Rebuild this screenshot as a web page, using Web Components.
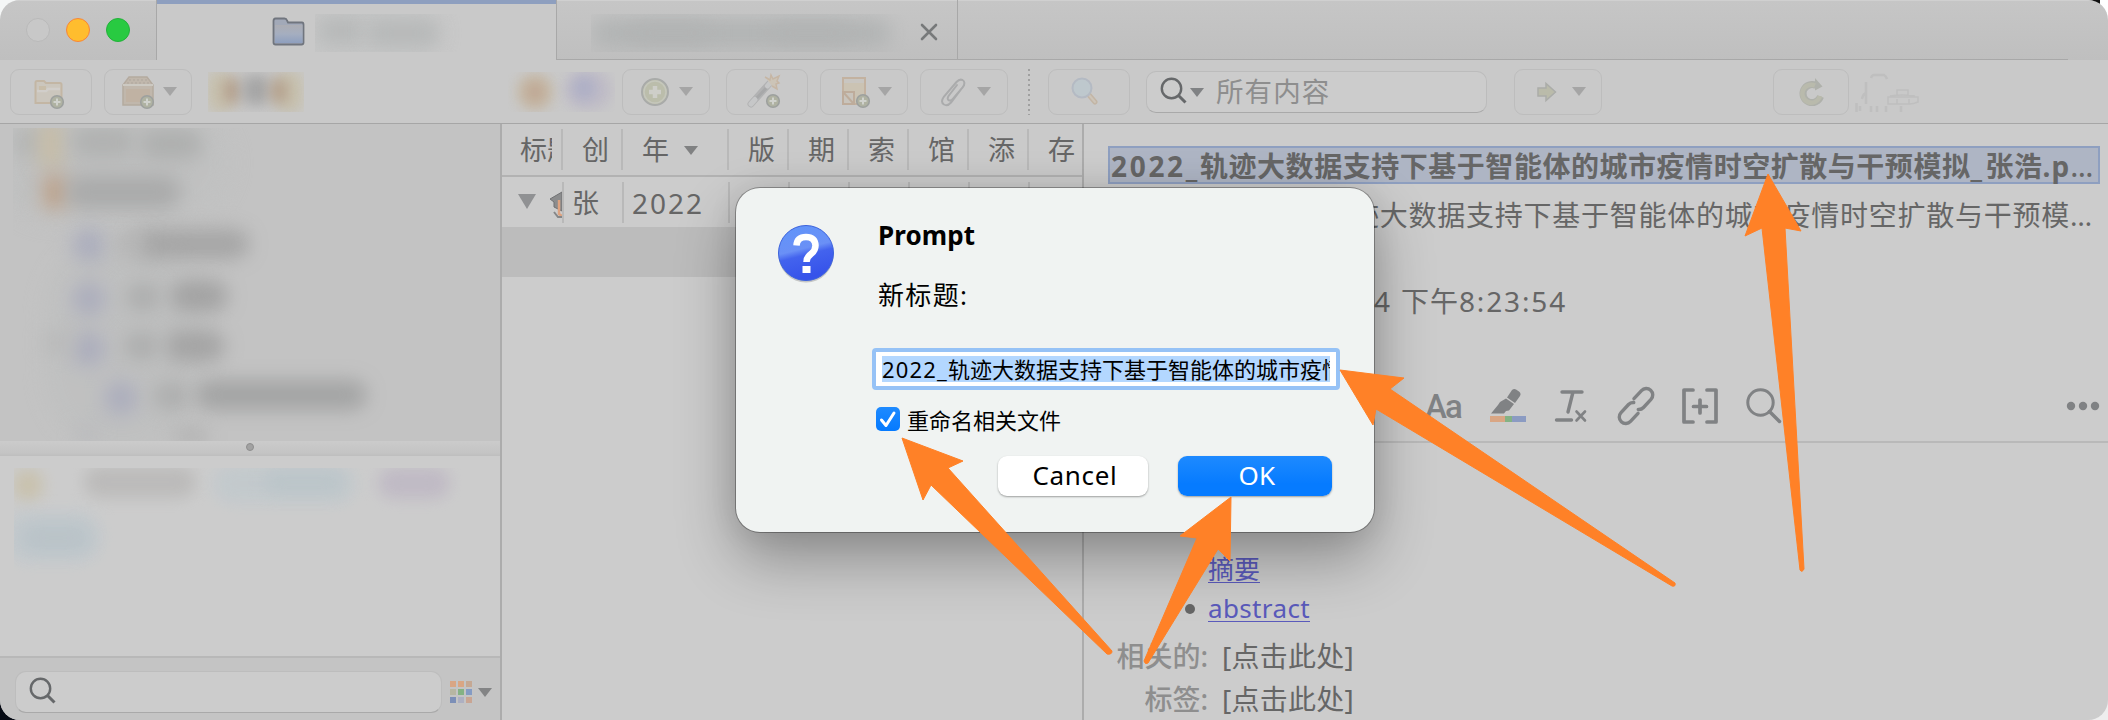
<!DOCTYPE html>
<html lang="zh-CN">
<head>
<meta charset="utf-8">
<title>Zotero</title>
<style>
html,body{margin:0;padding:0;width:2108px;height:720px;overflow:hidden;background:linear-gradient(90deg,#f4f6f6 0 50%,#111 50% 99.6%,#fff 99.6%) 0 0/100% 50% no-repeat,linear-gradient(90deg,#060a14 50%,#eee 50%);font-family:"Noto Sans","Noto Sans CJK SC",sans-serif}
</style>
</head>
<body>
<app-window></app-window>
<script>
const define=(name,html,after)=>customElements.define(name,class extends HTMLElement{
  constructor(){super();this.attachShadow({mode:'open'});}
  connectedCallback(){
    const t=document.createElement('template');
    t.innerHTML=typeof html==='function'?html(this):html;
    this.shadowRoot.replaceChildren(document.importNode(t.content,true));
    if(after)after(this);
  }
});

/* Text tracked out to a given advance width */
define('fit-text','<style>:host{display:inline-block;white-space:pre;flex:none}</style><slot></slot>',el=>{
  const w=+el.getAttribute('w'),n=[...el.textContent].length;
  el.style.letterSpacing='0px';
  el.style.letterSpacing=((w-el.getBoundingClientRect().width)/n).toFixed(3)+'px';
});

define('drop-arrow',el=>`<style>:host{display:block;width:14px;height:9px;flex:none}svg{display:block;width:100%;height:100%}</style><svg viewBox="0 0 14 9" preserveAspectRatio="none"><path d="M0 0h14L7 9z" fill="${el.getAttribute('color')||'#a5a5a5'}"/></svg>`);

const plus=(x,y)=>`<circle cx="${x}" cy="${y}" r="6.300" fill="#abae9c" stroke="#969a97" stroke-width="1.600"/><path d="M${x-3.5} ${y}h7M${x} ${y-3.5}v7" stroke="#d2d4ce" stroke-width="2"/>`;
const icons={
  folderAdd:[32,28,`<path d="M2.500 25V4.500q0-1.500 1.500-1.500h7l2 2h14q1.500 0 1.500 1.500V25z" fill="#ccc6bb" stroke="#c3b39e" stroke-width="2"/><path d="M4 13h9l2-2h12" stroke="#d3d0cb" stroke-width="2.500" fill="none"/><rect x="6" y="8" width="7" height="4" fill="#c8bca4"/>${plus(24,24)}`],
  boxAdd:[34,34,`<path d="M7 2h18l6 8v20H1V10z" fill="#bfb4a8" stroke="#b1a698" stroke-width="1.500"/><path d="M1 10h30" stroke="#cdc9c1" stroke-width="2"/><path d="M7 5h19M5 8h23" stroke="#aaa195" stroke-dasharray="2 2"/><path d="M4 14h24v13H4z" fill="#bfae9d"/>${plus(25,27)}`],
  plusBig:[30,30,`<circle cx="15" cy="15" r="13" fill="#b9bba6" stroke="#a4a6a4" stroke-width="2"/><circle cx="15" cy="15" r="11" fill="none" stroke="#c5c7ba" stroke-width="1.500"/><path d="M9 15h12M15 9v12" stroke="#cfd0ca" stroke-width="4.500"/>`],
  wand:[34,34,`<path d="M4 29 22 9" stroke="#aeafb0" stroke-width="7" stroke-linecap="round"/><path d="M6 27 23 9" stroke="#a2a3a4" stroke-width="3"/><path d="M4 29l4-4.500M20.500 11l2.500-3" stroke="#c6c7c8" stroke-width="5" stroke-linecap="round"/><path d="M18 2l5 3 1-5 2 4 6-3-2 5 2 2-3 1 1 5-5-3" fill="#cdc4b5" stroke="#c6b39e" stroke-width="1.500"/>${plus(26,26)}`],
  noteAdd:[32,34,`<path d="M3 3h22v26H3z" fill="#ccc3b0" stroke="#c2ae99" stroke-width="2"/><path d="M4 4h20v4H4z" fill="#c9c6c0"/><path d="M3 17h11v12H3z" fill="#c9c4ba" stroke="#bda894" stroke-width="2"/><path d="M4 18l9 10" stroke="#bda894" stroke-width="2"/>${plus(23,26)}`],
  clip:[28,30,`<path d="M17 8 8.500 19q-2 3.500.800 4.500 2 .500 3.800-2L23 10q3-5-.500-7-3-1.300-6 2L4 19.500q-4 5.500 0 8 3.500 2 7-2L24 8.500" fill="none" stroke="#a5a6a7" stroke-width="2" stroke-linecap="round"/>`],
  findBlue:[28,30,`<path d="M18 18l6 7" stroke="#c2b29f" stroke-width="5" stroke-linecap="round"/><path d="M18 18l6 7" stroke="#cec4b6" stroke-width="2" stroke-linecap="round"/><circle cx="11" cy="11" r="9.500" fill="#bdc8ce" stroke="#b1b8c3" stroke-width="2"/>`],
  go:[20,20,`<path d="M1 6h8V1.500L18.500 10 9 18.500V14H1z" fill="#b8b9a5" stroke="#a6a8a4" stroke-width="1.500"/>`],
  sync:[26,28,`<path d="M22.500 18.500A9 9 0 1 1 18 7.500" fill="none" stroke="#abada6" stroke-width="7"/><path d="M17 0v12.500l7.500-4z" fill="#abada6"/><path d="M22 18A9 9 0 1 1 17 7.500" fill="none" stroke="#b7b8a7" stroke-width="4.500"/>`],
  lens:[28,28,`<circle cx="11.500" cy="11.500" r="9.700" fill="none" stroke="#66686a" stroke-width="2.400"/><path d="M18.500 18.500l7 7" stroke="#66686a" stroke-width="3"/>`],
  lensWide:[36,36,`<circle cx="14.500" cy="14.500" r="12.700" fill="none" stroke="#808284" stroke-width="3"/><path d="M23.500 23.500l10 10" stroke="#808284" stroke-width="3.500" stroke-linecap="round"/>`],
  folder:[33,29,`<path d="M1.500 4q0-2.500 2-2.500h9q2 0 2.500 2l1 2h14q1.500 0 1.500 2v18q0 2-2 2h-26q-2 0-2-2z" fill="#a2a9b8" stroke="#70757e" stroke-width="1.800"/><path d="M3 8h27.500v18H3z" fill="url(#g)"/><defs><linearGradient id="g" x2="0" y2="1"><stop stop-color="#acadb3"/><stop offset=".5" stop-color="#a5aec0"/><stop offset="1" stop-color="#8e9fbe"/></linearGradient></defs>`],
  close:[18,18,`<path d="M2 2l14 14M16 2L2 16" stroke="#77797a" stroke-width="2.600" stroke-linecap="round"/>`],
  marker:[36,36,`<path d="M22 2q2-1.500 4-.500l3 2q2.500 2 1 4.500l-5 7-8-5.500zM16 10.500l8 5.500-5 6.500-3 .500-2 2.500H1L8 17l2-3z" fill="#808284"/><path d="M0 28h15v6H0z" fill="#d9a684"/><path d="M15 28h7v6h-7z" fill="#84b284"/><path d="M22 28h14v6H22z" fill="#8b9bc2"/>`],
  clear:[32,36,`<path d="M7 4h20M18 4l-5 20" stroke="#808284" stroke-width="3.400" stroke-linecap="round" fill="none"/><path d="M1.500 32h15" stroke="#808284" stroke-width="3.400" stroke-linecap="round"/><path d="M21.500 23.500l8.500 9M30 23.500l-8.500 9" stroke="#808284" stroke-width="2.600" stroke-linecap="round"/>`],
  link:[38,38,`<g transform="translate(19 19) rotate(-47)" fill="none" stroke="#808284" stroke-width="3.400" stroke-linecap="round"><path d="M-4 6.500H-15a6.500 6.500 0 0 1 0-13H-4A6.500 6.500 0 0 1 1-4"/><path d="M4-6.500H15a6.500 6.500 0 0 1 0 13H4A6.500 6.500 0 0 1-1 4"/></g>`],
  cite:[38,36,`<path d="M12 2H3v32h9M26 2h9v32h-9M12.500 18.500h13M19 12v13" fill="none" stroke="#808284" stroke-width="3.700" stroke-linecap="round" stroke-linejoin="round"/>`],
  dots:[34,10,`<g fill="#808284"><circle cx="5" cy="5" r="4.200"/><circle cx="17" cy="5" r="4.200"/><circle cx="29" cy="5" r="4.200"/></g>`],
  hat:[12,28,`<path d="M12 2 0 9l4 3v5l8 4z" fill="#8b8c8d" stroke="#707173"/><path d="M9 10v14l3 2" stroke="#dea27f" stroke-width="2.400" fill="none"/><path d="M4 22l4 5h4" fill="none" stroke="#858687" stroke-width="2"/>`],
  ghost:[66,46,`<g fill="none" stroke="#bfbfbf" stroke-width="1.500"><path d="M42 26v-5h11v5M35 27q12-2 25 0M33 28h30v5q-5 2-8 2H33zM42 30v5M54 30v5"/><path d="M11 13v22M1.500 43V34M7 30q1-5 4-6M16 9q1-3 3-3h10q2 1 3 4" stroke-width="2.500"/><path d="M5 37v5M16 37v6M22 37v6M31 37v6M46 37v6" stroke-width="2.500"/></g>`],
  palette:[22,22,['#d9a684','#d9a684','#c5a893','#b7b6a2','#84b284','#849bc4','#7c8fb7','#adb0c2','#c9a593'].map((c,i)=>`<rect x="${i%3*8}" y="${(i/3|0)*8}" width="6" height="6" fill="${c}"/>`).join('')],
  question:[60,62,`<defs><linearGradient id="q" x2=".25" y2="1"><stop stop-color="#5f94fa"/><stop offset=".5" stop-color="#6a90f6"/><stop offset=".62" stop-color="#4363ee"/><stop offset="1" stop-color="#3653ea"/></linearGradient></defs><ellipse cx="30" cy="32" rx="27.500" ry="27.500" fill="#999" opacity=".5"/><circle cx="30" cy="30" r="27.500" fill="url(#q)" stroke="#3c62dc"/><path d="M20.500 22.500Q21 14 30 14t9.500 8.500q0 5-4.500 8.500-4.500 3-4.500 8" fill="none" stroke="#fff" stroke-width="6.500"/><rect x="26.500" y="43" width="8" height="7" fill="#fff"/>`]
};
define('ui-icon',el=>{const[w,h,s]=icons[el.getAttribute('name')];return`<style>:host{display:block;flex:none;width:${w}px;height:${h}px}svg{display:block;overflow:visible}</style><svg width="${w}" height="${h}" viewBox="0 0 ${w} ${h}">${s}</svg>`});

/* Privacy-blurred patch: blobs are "cx,cy,rx,ry,color" */
define('blur-patch',el=>{const w=el.getAttribute('w'),h=el.getAttribute('h'),b=el.getAttribute('blur')||9;
  return`<style>:host{display:block;flex:none;width:${w}px;height:${h}px;overflow:hidden}svg{display:block;opacity:${el.getAttribute('strength')||1}}</style><svg width="${w}" height="${h}"><defs><filter id="f" x="-200%" y="-200%" width="500%" height="500%" color-interpolation-filters="sRGB"><feGaussianBlur stdDeviation="${b}"/></filter></defs>${el.getAttribute('blobs').trim().split(/\s+/).map(s=>{const[x,y,rx,ry,c]=s.split(',');return`<rect x="${x-rx}" y="${y-ry}" width="${rx*2}" height="${ry*2}" rx="${Math.min(rx,ry)}" fill="${c}" filter="url(#f)"/>`}).join('')}</svg>`});

define('tool-button',el=>`<style>:host{display:flex;flex:none;align-items:center;box-sizing:border-box;width:${el.getAttribute('w')}px;height:46px;border:1.500px solid #bdbdbd;border-radius:9px;padding-left:${el.getAttribute('pad')}px;gap:${el.getAttribute('gap')||10}px;margin-left:${el.getAttribute('ml')||0}px}ui-icon{opacity:.85}</style><ui-icon name="${el.getAttribute('icon')}"></ui-icon>${el.hasAttribute('menu')?'<drop-arrow></drop-arrow>':''}`);

define('title-bar',`<style>
:host{display:flex;height:60px;flex:none;background:linear-gradient(#c6c6c6,#bfbfbf);box-sizing:border-box;box-shadow:inset 0 1px #d0d0d0}
.lights{width:157px;display:flex;align-items:center;padding-left:26px;gap:16px;box-sizing:border-box;border-right:1px solid #a8a8a8}
i{width:24px;height:24px;border-radius:50%;box-sizing:border-box;background:#c8c8c8;border:1px solid #b9b9b9}
.y{background:#ffbd2e;border-color:#f7853b}.g{background:#28ca41;border-color:#23b13a}
.tab{box-sizing:border-box;display:flex}
.a{width:399px;background:#c9c9c9;border-top:4px solid #8e9fbf;padding:10px 0 0 115px;gap:10px}
.a ui-icon{margin-top:3px}
.b{width:402px;border:solid #a8a8a8;border-width:0 1px 1px;padding:14px 0 0 34px;gap:1px}
.b ui-icon{margin-top:9px}
.rest{flex:1;border-bottom:1px solid #a8a8a8;margin-right:40px}
</style><div class="lights"><i></i><i class="y"></i><i class="g"></i></div>
<div class="tab a"><ui-icon name="folder"></ui-icon><blur-patch w="150" h="38" blur="9" blobs="56,19,70,26,#c4c5c5 26,17,22,12,#b6b8b8 88,19,36,12,#b6b8b8"></blur-patch></div>
<div class="tab b"><blur-patch w="328" h="38" blur="10" strength=".8" blobs="150,19,150,14,#adb0b0 80,19,40,9,#aeb0b0 220,19,40,9,#aeb0b0"></blur-patch><ui-icon name="close"></ui-icon></div><div class="rest"></div>`);

define('tool-bar',`<style>
:host{display:flex;align-items:center;height:64px;box-sizing:border-box;flex:none;background:#c9c9c9;border-bottom:1px solid #a6a6a6;padding:0 0 0 10px}
.sep{width:2px;height:46px;background:repeating-linear-gradient(#a0a0a0 0 2px,transparent 2px 5px);margin-left:20px;flex:none}
.search{display:flex;align-items:center;box-sizing:border-box;flex:none;width:341px;height:42px;margin-left:16px;border-radius:10px;background:#cccccc;border:1px solid #bcbcbc;border-bottom-color:#a9a9a9;padding-left:13px;color:#8e8e8e;font-size:27.500px;line-height:41px}
.search ui-icon{margin-top:-2px}
.search drop-arrow{margin:2px 12px 0 2px}
ui-icon[name=ghost]{margin-left:6px}
</style>
<tool-button icon="folderAdd" w="82" pad="22"></tool-button>
<tool-button icon="boxAdd" w="88" pad="17" gap="7" ml="12" menu></tool-button>
<blur-patch style="margin-left:16px" w="96" h="40" blur="7" blobs="12,20,14,22,#c7c1ae 82,20,14,22,#c7c1ae 24,19,8,13,#b39d89 48,18,14,16,#a5a5a5 71,19,8,13,#b39e89"></blur-patch>
<blur-patch style="margin-left:204px" w="107" h="40" blur="6.500" strength=".85" blobs="27,20,19,19,#c6bba8 27,20,11,12,#bfa48c 80,18,24,20,#bdb9c6 76,16,11,12,#a9abc6"></blur-patch>
<tool-button icon="plusBig" w="88" pad="17" gap="9" ml="7" menu></tool-button>
<tool-button icon="wand" w="82" pad="20" ml="16"></tool-button>
<tool-button icon="noteAdd" w="88" pad="19" gap="6" ml="12" menu></tool-button>
<tool-button icon="clip" w="88" pad="19" gap="9" ml="12" menu></tool-button>
<div class="sep"></div>
<tool-button icon="findBlue" w="82" pad="22" ml="18"></tool-button>
<div class="search"><ui-icon name="lens"></ui-icon><drop-arrow color="#808284"></drop-arrow><fit-text w="114.400">所有内容</fit-text></div>
<tool-button icon="go" w="88" pad="22" gap="15" ml="27" menu></tool-button>
<tool-button icon="sync" w="76" pad="24" ml="171"></tool-button>
<ui-icon name="ghost"></ui-icon>`);

define('left-pane',`<style>
:host{display:flex;flex-direction:column;width:500px;flex:none;background:#c3c3c3;border-right:2px solid #acacac}
.tree{height:317px;padding:4px 0 0 13px;box-sizing:border-box}
.split{height:15px;background:linear-gradient(#cbcbcb,#c4c4c4 80%,#bebebe);display:flex;align-items:center;justify-content:center}
.split i{width:8px;height:8px;border-radius:50%;background:#a2a2a2;border:1px solid #8e8e8e;box-sizing:border-box;margin-top:-3px}
.tags{height:202px;background:#ccc;border-bottom:2px solid #b8b8b8;padding:12px 0 0 14px;box-sizing:border-box}
.foot{flex:1;display:flex;align-items:center;padding:6px 0 0 15px;background:#c4c4c4}
.s{width:427px;height:42px;background:#ccc;border:1px solid #bdbdbd;border-bottom:1.500px solid #a9a9a9;border-radius:11px;box-sizing:border-box;padding:5px 0 0 13px;margin-right:8px}
drop-arrow{margin-left:6px}
</style>
<div class="tree"><blur-patch w="420" h="313" blur="9.500" strength=".72" blobs="100,35,120,60,#c0c1c1 110,215,80,110,#bfc0c0 18,14,20,14,#afb1b0 38,16,13,26,#c9bc9f 90,14,32,15,#a9abaa 158,16,32,15,#a6a8a7 42,64,15,18,#be9a7a 110,64,58,17,#a1a2a2 15,64,10,8,#babcbb 76,117,16,17,#a2a5bb 178,116,58,15,#9a9a9a 116,116,16,11,#b0b0b0 76,171,16,17,#a3a5bb 130,169,17,14,#a4a5a5 186,168,29,16,#979797 76,221,16,17,#a3a5bb 128,218,17,14,#a4a5a5 182,218,30,16,#999999 44,215,14,10,#b4b5b5 108,270,16,17,#a3a5bb 158,268,18,14,#a5a6a6 268,267,86,15,#979898 74,306,12,9,#b6b7bb 178,308,18,8,#aaaaaa"></blur-patch></div>
<div class="split"><i></i></div>
<div class="tags"><blur-patch w="460" h="150" blur="7.500" strength=".8" blobs="14,17,15,16,#c8bfa6 126,14,56,16,#b8b7b6 270,16,72,20,#c1c9cd 290,14,40,12,#b8c4c9 400,15,36,16,#bdb6c3 38,69,50,26,#c0c8cd 42,70,34,14,#b6c2c8"></blur-patch></div>
<div class="foot"><div class="s"><ui-icon name="lens"></ui-icon></div><ui-icon name="palette"></ui-icon><drop-arrow color="#838485"></drop-arrow></div>`);

define('item-list',`<style>
:host{display:flex;flex-direction:column;width:580px;flex:none;background:#ccc;border-right:2px solid #acacac;color:#666;font-size:27px}
.h{display:flex;height:51px;border-bottom:2px solid #b2b2b2;background:#cacaca;line-height:50px;flex:none}
.c{box-sizing:border-box;height:41px;margin-top:5px;border-right:2px solid #b9b9b9;overflow:hidden;line-height:42px;white-space:nowrap;flex:none;display:flex}
.h span{display:block;overflow:hidden;width:32px}
.r{display:flex;height:50px;flex:none}
.sel{height:50px;background:#bcbcbc}
.r .c{padding-left:8px}
drop-arrow{margin-top:17px}
</style>
<div class="h"><div class="c" style="width:61px;padding-left:18px"><span>标题</span></div><div class="c" style="width:60px;padding-left:19px"><span>创</span></div><div class="c" style="width:106px;padding-left:19px">年<drop-arrow color="#808182" style="margin-left:15px"></drop-arrow></div>${[...'版期索馆添存'].map((t,i)=>`<div class="c" style="width:${i==5?54:60}px;padding-left:19px;${i==5?'border:0':''}"><span>${t}</span></div>`).join('')}</div>
<div class="r"><div class="c" style="width:62px;padding-left:16px"><drop-arrow color="#909193" style="width:18px;height:15px;margin-top:12px"></drop-arrow><ui-icon name="hat" style="margin:8px 0 0 14px"></ui-icon></div><div class="c" style="width:60px">张</div><div class="c" style="width:106px"><fit-text w="72" style="font-size:28px">2022</fit-text></div>${'<div class="c" style="width:60px"></div>'.repeat(5)}</div>
<div class="sel"></div>`);

define('detail-pane',`<style>
:host{display:block;flex:1;background:#ccc;color:#666;font-size:28px;min-width:0}
.t{display:flex;margin:22px 8px 0 24px;height:38px;box-sizing:border-box;border:2px solid #8e9fc0;background:#aeb5c4;font-weight:700;line-height:36px;padding-left:1px}
.t fit-text:last-child{font-weight:500}
.n{display:flex;margin:12px 0 0 267px;height:38px;line-height:38px}
.d{display:flex;margin:48px 0 0 290px;height:38px;line-height:38px}
.bar{display:flex;align-items:center;height:70px;margin-top:53px;box-sizing:border-box;border-bottom:2px solid #b9b9b9;padding:0 8px 2px 341px;color:#808284}
.bar ui-icon[name=dots]{margin-left:auto}
.note{height:192px;box-sizing:border-box;padding:108px 0 0 124px;font-size:26px}
.li{display:flex;height:39px;line-height:39px}
.li i{width:10px;height:10px;border-radius:50%;background:#666;margin:14px 13px 0 -23px}
.li fit-text{color:#5a5abb}
.li .u{height:31px;border-bottom:1.500px solid #5a5abb;line-height:36px}
.row{display:flex;height:43px;line-height:43px;gap:14px}
.row b{width:124px;text-align:right;color:#8e8e8e;font-weight:500;white-space:nowrap}
</style>
<div class="t"><fit-text w="89">2022_</fit-text><fit-text w="770.500">轨迹大数据支持下基于智能体的城市疫情时空扩散与干预模拟</fit-text><fit-text w="15">_</fit-text><fit-text w="57">张浩</fit-text><fit-text w="28">.p</fit-text><fit-text w="30" style="font-family:'Noto Sans'">…</fit-text></div>
<div class="n"><fit-text w="719">迹大数据支持下基于智能体的城市疫情时空扩散与干预模</fit-text><fit-text w="29" style="font-family:'Noto Sans'">…</fit-text></div>
<div class="d"><fit-text w="27">4 </fit-text><fit-text w="58">下午</fit-text><fit-text w="108">8:23:54</fit-text></div>
<div class="bar"><fit-text w="36" style="font-family:Roboto;font-size:33px;font-weight:500">Aa</fit-text><ui-icon name="marker" style="margin-left:29px"></ui-icon><ui-icon name="clear" style="margin-left:29px"></ui-icon><ui-icon name="link" style="margin-left:30px"></ui-icon><ui-icon name="cite" style="margin-left:26px"></ui-icon><ui-icon name="lensWide" style="margin-left:27px"></ui-icon><ui-icon name="dots"></ui-icon></div>
<div class="note"><div class="li"><div class="u"><fit-text w="52">摘要</fit-text></div></div><div class="li"><i></i><div class="u"><fit-text w="102">abstract</fit-text></div></div></div>
<div class="row"><b>相关的:</b><fit-text w="132">[点击此处]</fit-text></div>
<div class="row"><b>标签:</b><fit-text w="132">[点击此处]</fit-text></div>`);

define('prompt-dialog',`<style>
:host{position:absolute;left:736px;top:188px;width:638px;height:344px;box-sizing:border-box;background:#f0f3f2;border-radius:24px;box-shadow:0 0 0 1px rgba(0,0,0,.3),0 26px 60px rgba(0,0,0,.32),0 0 30px rgba(0,0,0,.08);display:flex;padding:35px 34px 0 40px;color:#000}
.m{margin-left:36px;flex:1;display:flex;flex-direction:column;font-size:26px}
.p{font-weight:700;height:24px;line-height:24px;padding-left:6px}
.q{height:30px;line-height:30px;margin-top:33px;padding-left:6px}
.in{height:42px;width:468px;box-sizing:border-box;margin-top:38px;border:4px solid #96c2f6;border-radius:4px;background:#fff;padding:4px 6px;font-size:22px}
.in div{display:flex;height:26px;line-height:27px;overflow:hidden;background:#b3d7ff}
.ck{display:flex;align-items:center;height:24px;margin-top:17px;padding-left:4px;gap:7px;font-size:22px}
.ck svg{display:block;border-radius:5px;background:linear-gradient(#1e8aff,#057aff)}
.bt{display:flex;gap:30px;margin:25px 0 0 126px}
.bt div{width:150px;height:40px;border-radius:9px;background:#fff;box-shadow:0 1px 2px rgba(0,0,0,.35);display:flex;justify-content:center;line-height:38px;padding-left:4px;box-sizing:border-box}
.bt .ok{width:154px;background:linear-gradient(#1e8aff,#067bff 70%);color:#fff}
</style>
<ui-icon name="question"></ui-icon>
<div class="m"><div class="p"><fit-text w="97">Prompt</fit-text></div>
<div class="q"><fit-text w="82">新标题</fit-text><fit-text w="11">:</fit-text></div>
<div class="in"><div><fit-text w="66">2022_</fit-text><fit-text w="396">轨迹大数据支持下基于智能体的城市疫情</fit-text></div></div>
<div class="ck"><svg width="24" height="24"><path d="M5.500 13l4.500 5.500L18 6" fill="none" stroke="#fff" stroke-width="3" stroke-linecap="round" stroke-linejoin="round"/></svg><fit-text w="154">重命名相关文件</fit-text></div>
<div class="bt"><div><fit-text w="85">Cancel</fit-text></div><div class="ok"><fit-text w="37">OK</fit-text></div></div></div>`);

define('arrow-overlay',`<style>:host{position:absolute;inset:0;pointer-events:none}svg{display:block}</style>
<svg width="2108" height="720" fill="#ff8127" stroke="#ff8127" stroke-width="1" stroke-linejoin="round">
<path d="M902 438 963 461 948 468 1112 651Q1112 655 1107 654L931 485 923 500z"/>
<path d="M1231 497 1230 561 1218 549 1148 663Q1145 665 1144 661L1197 538 1180 536z"/>
<path d="M1340 370 1404 378 1390 389 1675 583Q1676 587 1672 586L1376 409 1373 425z"/>
<path d="M1768 174 1801 231 1785 228 1804 569Q1802 573 1800 570L1762 228 1745 236z"/></svg>`);

define('app-window',`<style>
:host{display:flex;flex-direction:column;position:relative;width:2108px;height:720px}
.w{display:flex;flex-direction:column;height:720px;border-radius:20px;overflow:hidden}
.main{display:flex;flex:1;min-height:0}
</style><div class="w"><title-bar></title-bar><tool-bar></tool-bar><div class="main"><left-pane></left-pane><item-list></item-list><detail-pane></detail-pane></div></div><prompt-dialog></prompt-dialog><arrow-overlay></arrow-overlay>`);
</script>
</body>
</html>
